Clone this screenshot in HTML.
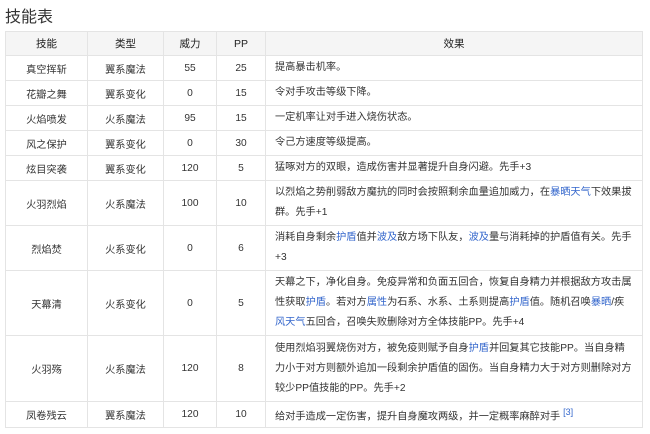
<!DOCTYPE html>
<html><head><meta charset="utf-8"><style>
body{margin:0;background:#fff;font-family:"Liberation Sans","Noto Sans CJK SC",sans-serif;color:#333;}
h2{position:absolute;left:5px;top:3px;margin:0;font-weight:normal;font-size:16px;color:#333;}
table{position:absolute;left:5px;top:31px;border-collapse:collapse;table-layout:fixed;width:637px;font-size:10.2px;}
td,th{border:1px solid #e4e4e4;text-align:center;padding:0;}
th{background:#f5f5f5;font-weight:normal;height:23px;color:#222;font-size:10.5px;}
td{height:24px;}
td.e{text-align:left;padding-left:9px;line-height:20px;white-space:nowrap;}
a{color:#3366cc;text-decoration:none;}
sup{color:#3366cc;font-size:9px;}
</style></head><body>
<h2>技能表</h2>
<table>
<colgroup><col style="width:82px"><col style="width:76px"><col style="width:53px"><col style="width:49px"><col style="width:377px"></colgroup>
<tr><th>技能</th><th>类型</th><th>威力</th><th>PP</th><th>效果</th></tr>
<tr><td>真空挥斩</td><td>翼系魔法</td><td>55</td><td>25</td><td class="e">提高暴击机率。</td></tr>
<tr><td>花瓣之舞</td><td>翼系变化</td><td>0</td><td>15</td><td class="e">令对手攻击等级下降。</td></tr>
<tr><td>火焰喷发</td><td>火系魔法</td><td>95</td><td>15</td><td class="e">一定机率让对手进入烧伤状态。</td></tr>
<tr><td>风之保护</td><td>翼系变化</td><td>0</td><td>30</td><td class="e">令己方速度等级提高。</td></tr>
<tr><td>炫目突袭</td><td>翼系变化</td><td>120</td><td>5</td><td class="e">猛啄对方的双眼，造成伤害并显著提升自身闪避。先手+3</td></tr>
<tr><td style="height:44px">火羽烈焰</td><td>火系魔法</td><td>100</td><td>10</td><td class="e">以烈焰之势削弱敌方魔抗的同时会按照剩余血量追加威力，在<a>暴晒天气</a>下效果拔<br>群。先手+1</td></tr>
<tr><td style="height:44px">烈焰焚</td><td>火系变化</td><td>0</td><td>6</td><td class="e">消耗自身剩余<a>护盾</a>值并<a>波及</a>敌方场下队友，<a>波及</a>量与消耗掉的护盾值有关。先手<br>+3</td></tr>
<tr><td style="height:64px">天幕清</td><td>火系变化</td><td>0</td><td>5</td><td class="e">天幕之下，净化自身。免疫异常和负面五回合，恢复自身精力并根据敌方攻击属<br>性获取<a>护盾</a>。若对方<a>属性</a>为石系、水系、土系则提高<a>护盾</a>值。随机召唤<a>暴晒</a>/疾<br><a>风天气</a>五回合，召唤失败删除对方全体技能PP。先手+4</td></tr>
<tr><td style="height:65px">火羽殇</td><td>火系魔法</td><td>120</td><td>8</td><td class="e">使用烈焰羽翼烧伤对方，被免疫则赋予自身<a>护盾</a>并回复其它技能PP。当自身精<br>力小于对方则额外追加一段剩余护盾值的固伤。当自身精力大于对方则删除对方<br>较少PP值技能的PP。先手+2</td></tr>
<tr><td>凤卷残云</td><td>翼系魔法</td><td>120</td><td>10</td><td class="e">给对手造成一定伤害，提升自身魔攻两级，并一定概率麻醉对手 <sup>[3]</sup></td></tr>
</table>
</body></html>
